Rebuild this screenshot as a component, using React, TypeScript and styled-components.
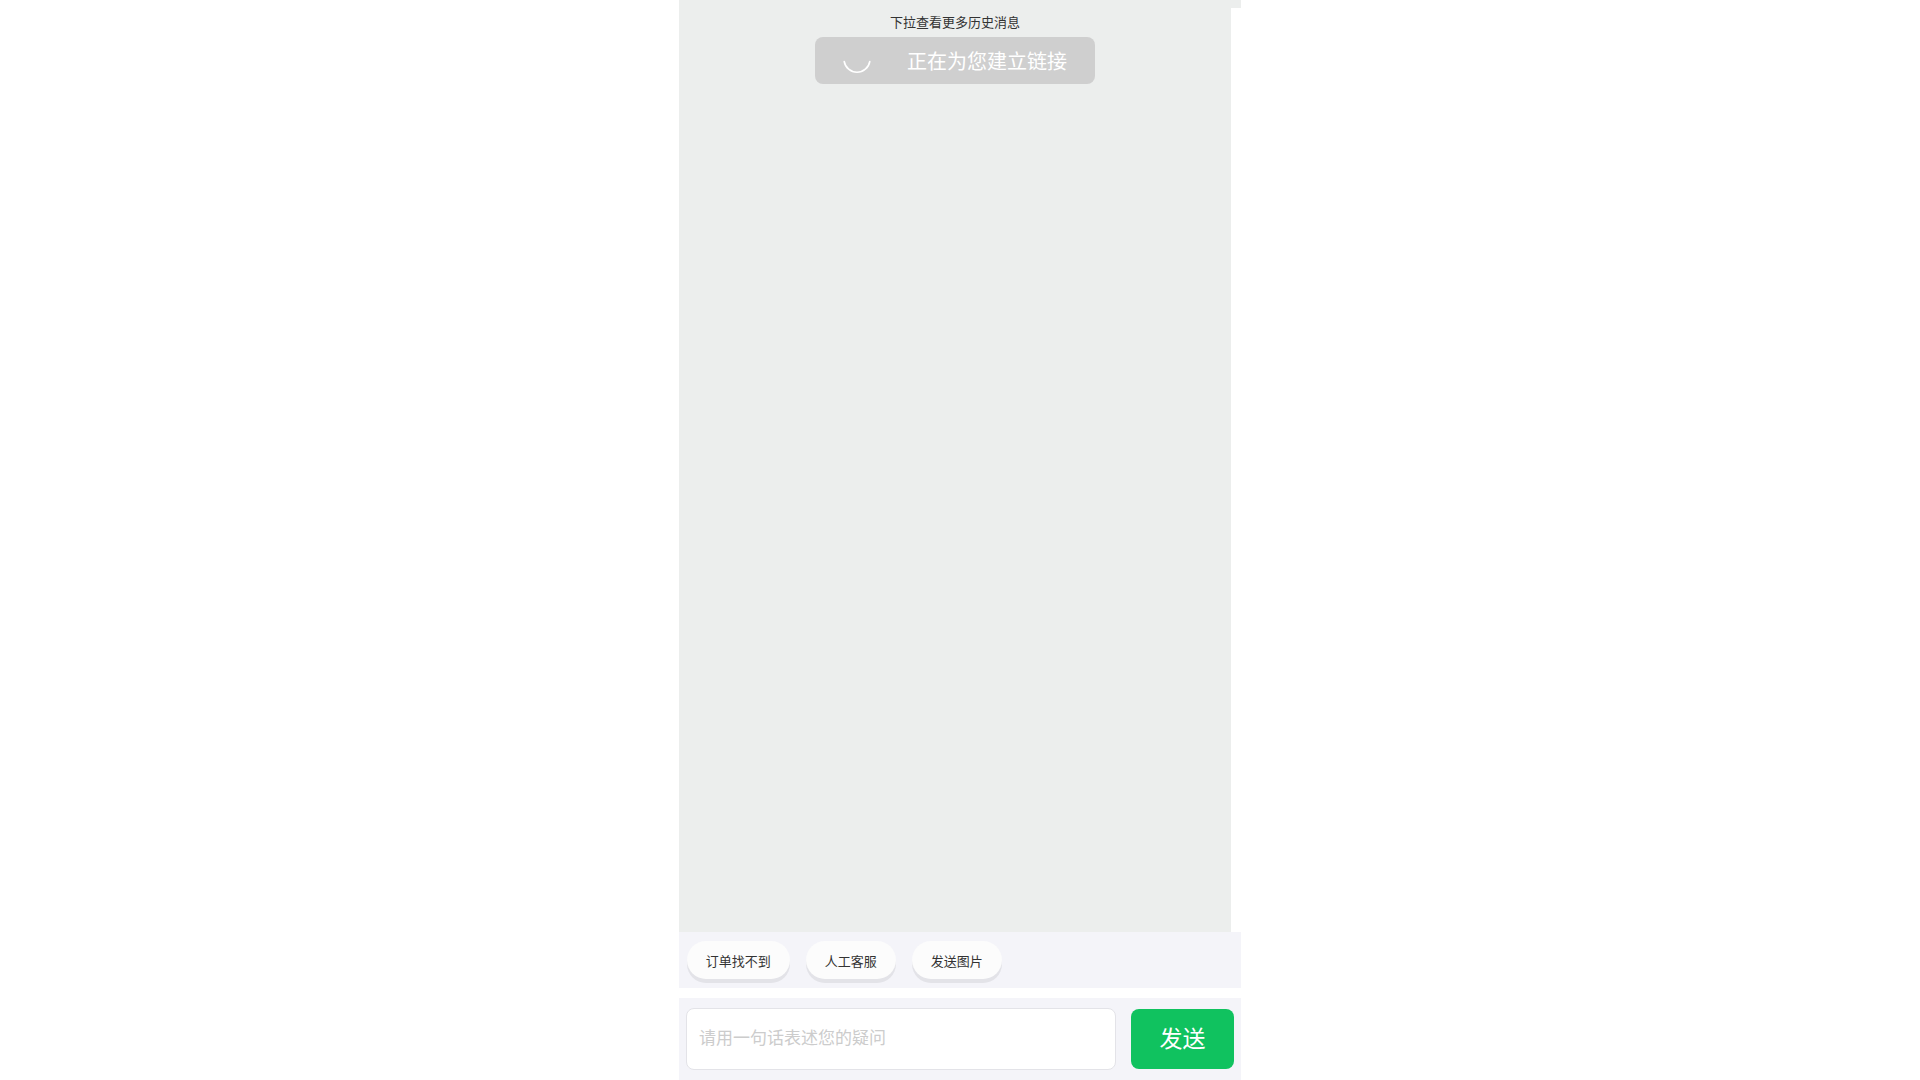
import React from 'react'
import styled, {createGlobalStyle} from 'styled-components'

const GlobalStyle = createGlobalStyle`
  html, body {
    margin: 0;
    padding: 0;
    background-color: #fff;
    font-family: "Noto Sans CJK SC", "Noto Sans", sans-serif;
  }
  * {
    box-sizing: border-box;
  }
`
const Wrapper = styled.div`
  position: relative;
  display: flex;
  flex-direction: column;
  width: 562px;
  height: 1080px;
  margin: 0 auto;
  overflow: hidden;
`
const TopEdge = styled.div`
  flex: none;
  height: 8px;
  background-color: #eceeed;
`
const Messages = styled.div`
  flex-grow: 1;
  width: 552px;
  padding-top: 6px;
  background-color: #eceeed;
`
const HistoryHint = styled.div`
  font-size: 13px;
  line-height: 16px;
  text-align: center;
  color: #333;
`
const Toast = styled.div`
  position: absolute;
  top: 37px;
  left: 136px;
  display: flex;
  align-items: center;
  width: 280px;
  height: 47px;
  padding-left: 19px;
  border-radius: 8px;
  background-color: #cfcfcf;
  color: #fff;
  font-size: 20px;
  line-height: 48px;
`
const Spinner = styled.svg`
  flex: none;
  width: 30px;
  height: 30px;
  margin: 4px 35px 0 8px;
`
const QuickBar = styled.div`
  flex: none;
  display: flex;
  gap: 16.5px;
  height: 56px;
  padding: 9px 0 0 8px;
  background-color: #f4f4f9;
`
const QuickChip = styled.div`
  height: 38px;
  padding: 0 18.75px;
  border-radius: 19px;
  background-color: #fcfcfc;
  box-shadow: 0 4px 0 #e3e3e8;
  font-size: 13px;
  line-height: 40px;
  color: #333;
`
const InputBar = styled.div`
  flex: none;
  display: flex;
  align-items: flex-start;
  justify-content: space-between;
  height: 82px;
  margin-top: 10px;
  padding: 10px 7px 0 7px;
  background-color: #f4f4f9;
`
const TextBox = styled.div`
  width: 430px;
  height: 62px;
  padding: 0 12px;
  border: 1px solid #e3e3e8;
  border-radius: 8px;
  background-color: #fff;
  font-size: 17px;
  line-height: 56px;
  color: #ccc;
`
const SendButton = styled.div`
  width: 103px;
  height: 60px;
  margin-top: 1px;
  border-radius: 8px;
  background-color: #10c25f;
  color: #fff;
  font-size: 23px;
  line-height: 56px;
  text-align: center;
`

const quickReplies = ['订单找不到', '人工客服', '发送图片']

const App = () => {
  return (
    <Wrapper>
      <GlobalStyle />
      <TopEdge />
      <Messages>
        <HistoryHint>下拉查看更多历史消息</HistoryHint>
      </Messages>
      <Toast>
        <Spinner viewBox="0 0 30 30">
          <path d="M2.2 13.5 A13 13 0 0 0 27.8 13.5" fill="none" stroke="#fff" strokeWidth="1.6" strokeLinecap="round" />
        </Spinner>
        正在为您建立链接
      </Toast>
      <QuickBar>
        {quickReplies.map((text) => (
          <QuickChip key={text}>{text}</QuickChip>
        ))}
      </QuickBar>
      <InputBar>
        <TextBox>请用一句话表述您的疑问</TextBox>
        <SendButton>发送</SendButton>
      </InputBar>
    </Wrapper>
  )
}

export default App
